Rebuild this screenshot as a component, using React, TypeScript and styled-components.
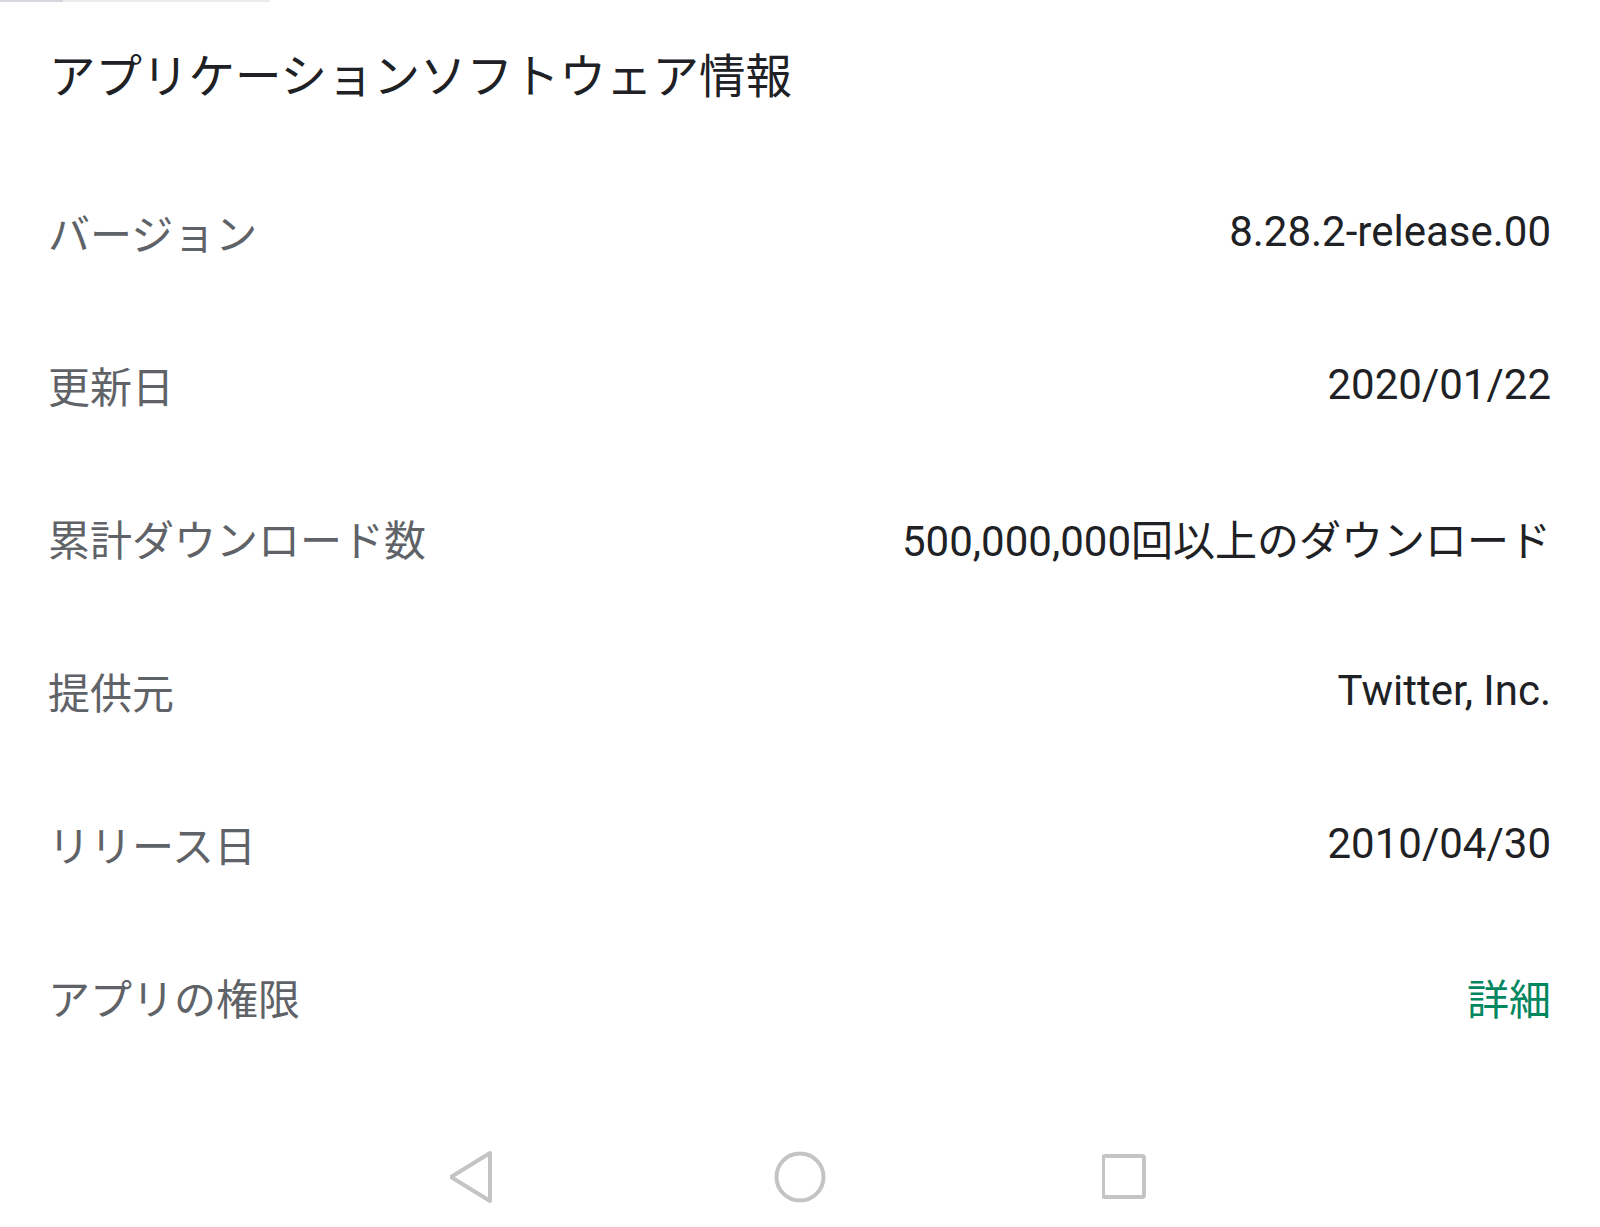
import React from "react";
import styled, { createGlobalStyle } from "styled-components";

const GlobalStyle = createGlobalStyle`
  html, body {
    margin: 0;
    padding: 0;
    background: #ffffff;
  }
  body {
    font-family: "Noto Sans CJK JP", "Noto Sans", sans-serif;
  }
`;

const Pantalla = styled.div`
  width: 1600px;
  height: 1227px;
  background: #ffffff;
  display: flex;
  flex-direction: column;
  overflow: hidden;
`;

const Indicador = styled.div`
  width: 270px;
  height: 2px;
  background: linear-gradient(to right, #d6d6dc 0, #d6d6dc 63px, #ececf0 63px);
`;

const Cabecera = styled.h1`
  margin: 0;
  height: 154px;
  box-sizing: border-box;
  padding: 0 48px 12px 49px;
  display: flex;
  align-items: center;
  font-family: "Noto Sans CJK JP", sans-serif;
  font-weight: 400;
  font-size: 46.5px;
  color: #202124;
`;

const Lista = styled.div`
  display: flex;
  flex-direction: column;
  padding: 0 49px 0 48px;
`;

const Fila = styled.div`
  height: 153px;
  display: flex;
  align-items: center;
  justify-content: space-between;
`;

const Etiqueta = styled.span`
  font-family: "Noto Sans CJK JP", sans-serif;
  font-size: 42px;
  color: #5f6368;
`;

const Valor = styled.span<{ $link?: boolean }>`
  font-family: Roboto, "Noto Sans CJK JP", sans-serif;
  font-size: 42px;
  color: ${(p) => (p.$link ? "#01875f" : "#202124")};
`;

const Navegacion = styled.nav`
  margin-top: 54px;
  height: 100px;
  display: flex;
  justify-content: center;
  align-items: center;
  gap: 226px;
`;

const Boton = styled.div`
  width: 100px;
  height: 100px;
  display: flex;
  align-items: center;
  justify-content: center;
`;

const gris = "#c4c4c4";

const filas: { etiqueta: string; valor: string; link?: boolean }[] = [
  { etiqueta: "バージョン", valor: "8.28.2-release.00" },
  { etiqueta: "更新日", valor: "2020/01/22" },
  { etiqueta: "累計ダウンロード数", valor: "500,000,000回以上のダウンロード" },
  { etiqueta: "提供元", valor: "Twitter, Inc." },
  { etiqueta: "リリース日", valor: "2010/04/30" },
  { etiqueta: "アプリの権限", valor: "詳細", link: true },
];

const App = () => {
  return (
    <>
      <GlobalStyle />
      <Pantalla>
        <Indicador />
        <Cabecera>アプリケーションソフトウェア情報</Cabecera>
        <Lista>
          {filas.map((f) => (
            <Fila key={f.etiqueta}>
              <Etiqueta>{f.etiqueta}</Etiqueta>
              <Valor $link={f.link}>{f.valor}</Valor>
            </Fila>
          ))}
        </Lista>
        <Navegacion>
          <Boton>
            <svg width="48" height="54" viewBox="0 0 48 54">
              <path
                d="M40 3 L40 51 L1 27 Z"
                fill="none"
                stroke={gris}
                strokeWidth="4"
                strokeLinejoin="round"
              />
            </svg>
          </Boton>
          <Boton>
            <svg width="54" height="54" viewBox="0 0 54 54">
              <circle cx="27" cy="27" r="23.5" fill="none" stroke={gris} strokeWidth="4" />
            </svg>
          </Boton>
          <Boton>
            <svg width="48" height="48" viewBox="0 0 48 48">
              <rect x="1" y="3" width="41" height="41" rx="2" fill="none" stroke={gris} strokeWidth="4" />
            </svg>
          </Boton>
        </Navegacion>
      </Pantalla>
    </>
  );
};

export default App;
